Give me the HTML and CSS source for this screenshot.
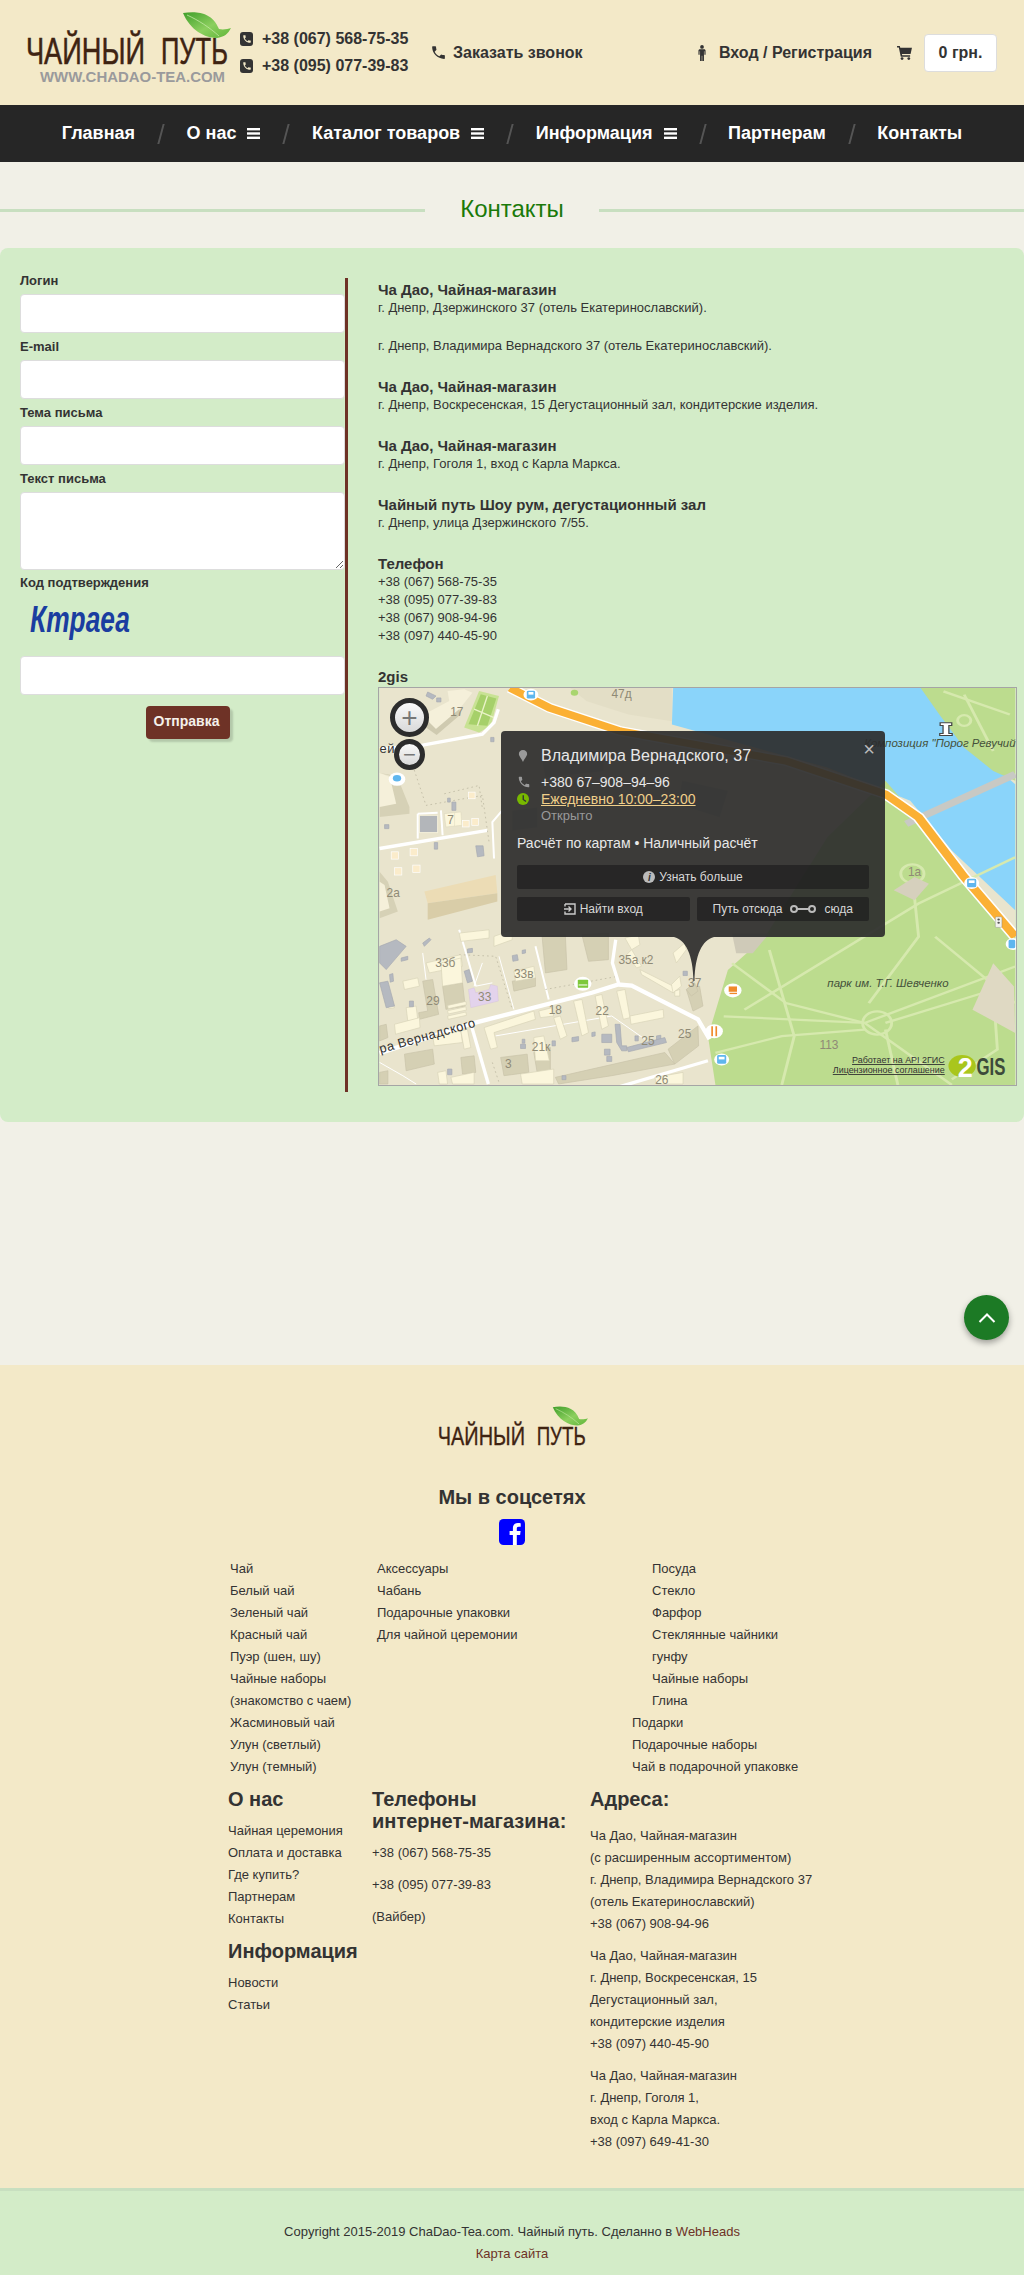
FILE: index.html
```html
<!DOCTYPE html>
<html lang="ru">
<head>
    <meta charset="UTF-8">
    <title>Контакты - Чайный путь</title>
    <link rel="stylesheet" href="styles.css">
</head>
<body>
    <svg class="defs">
        <defs>
            <linearGradient id="leafGrad" x1="0" y1="0" x2="1" y2="1">
                <stop offset="0" stop-color="#3f9e2a"/>
                <stop offset="0.55" stop-color="#8ccf5e"/>
                <stop offset="1" stop-color="#5fb53a"/>
            </linearGradient>
            <symbol id="phoneGlyph" viewBox="0 0 24 24">
                <path d="M6.600 10.800c1.400 2.800 3.800 5.100 6.600 6.600l2.200-2.200c.3-.3.7-.4 1-.2 1.100.4 2.300.6 3.600.6.6 0 1 .4 1 1V20c0 .6-.4 1-1 1C10.600 21 3 13.400 3 4c0-.6.4-1 1-1h3.500c.6 0 1 .4 1 1 0 1.200.2 2.400.6 3.600.1.300 0 .7-.2 1l-2.300 2.200z"/>
            </symbol>
            <symbol id="barsGlyph" viewBox="0 0 13 11">
                <rect width="13" height="2.400"/><rect y="4.300" width="13" height="2.400"/><rect y="8.600" width="13" height="2.400"/>
            </symbol>
            <symbol id="leafGlyph" viewBox="180 8 54 34">
                <path d="M183 13C195 11 212 11 219 29 223 30 228 29 231 28 228 34 224 37 217 38 205 38 190 30 183 13z" fill="url(#leafGrad)"/>
                <path d="M187 15C198 20 209 27 219 36" fill="none" stroke="#c4e8a4" stroke-width="0.800"/>
            </symbol>
        </defs>
    </svg>

    <header class="top-header">
        <svg class="logo" viewBox="0 0 240 105">
            <text class="logo-name" x="26" y="64" textLength="119" lengthAdjust="spacingAndGlyphs">ЧАЙНЫЙ</text>
            <text class="logo-name" x="161" y="64" textLength="67" lengthAdjust="spacingAndGlyphs">ПУТЬ</text>
            <use href="#leafGlyph" x="180" y="8" width="54" height="34"/>
            <text class="logo-url" x="40" y="82" textLength="185" lengthAdjust="spacingAndGlyphs">WWW.CHADAO-TEA.COM</text>
        </svg>
        <div class="header-phones">
            <div class="header-phone">
                <span class="phone-box"><svg class="phone-box-icon"><use href="#phoneGlyph"/></svg></span>
                +38 (067) 568-75-35
            </div>
            <div class="header-phone">
                <span class="phone-box"><svg class="phone-box-icon"><use href="#phoneGlyph"/></svg></span>
                +38 (095) 077-39-83
            </div>
        </div>
        <a class="header-link" href="#"><svg class="call-icon"><use href="#phoneGlyph"/></svg>Заказать звонок</a>
        <a class="header-link login-link" href="#">
            <svg class="person-icon" viewBox="0 0 8 18">
                <circle cx="4" cy="2.200" r="2.100"/>
                <path d="M1.600 4.800h4.800c.9 0 1.600.7 1.600 1.600v4.500H6.700V7H6.200v11H4.300v-6h-.6v6H1.800V7h-.5v3.900H0V6.400c0-.9.7-1.600 1.600-1.600z"/>
            </svg>Вход / Регистрация
        </a>
        <svg class="cart-icon" viewBox="0 0 16 15">
            <path d="M0 0h3l.5 2H16l-1.500 6.500H5.200l.3 1.500H14v1.600H4L1.900 1.600H0z"/>
            <circle cx="5.400" cy="13.500" r="1.500"/><circle cx="12.600" cy="13.500" r="1.500"/>
        </svg>
        <div class="cart-box">0 грн.</div>
    </header>

    <nav class="main-nav">
        <a href="#">Главная</a>
        <span class="nav-sep"></span>
        <a href="#">О нас <svg class="bars"><use href="#barsGlyph"/></svg></a>
        <span class="nav-sep"></span>
        <a href="#">Каталог товаров <svg class="bars"><use href="#barsGlyph"/></svg></a>
        <span class="nav-sep"></span>
        <a href="#">Информация <svg class="bars"><use href="#barsGlyph"/></svg></a>
        <span class="nav-sep"></span>
        <a href="#">Партнерам</a>
        <span class="nav-sep"></span>
        <a href="#">Контакты</a>
    </nav>

    <main class="page">
        <div class="page-title">
            <span class="title-line"></span>
            <h1>Контакты</h1>
            <span class="title-line"></span>
        </div>

        <section class="contact-card">
            <div class="form-col">
                <form class="contact-form">
                    <label>Логин</label>
                    <input type="text">
                    <label>E-mail</label>
                    <input type="text">
                    <label>Тема письма</label>
                    <input type="text">
                    <label>Текст письма</label>
                    <textarea></textarea>
                    <label>Код подтверждения</label>
                    <svg class="captcha" viewBox="0 0 150 48">
                        <text x="10" y="35" textLength="100" lengthAdjust="spacingAndGlyphs">Ктраеа</text>
                    </svg>
                    <input type="text">
                    <button type="button">Отправка</button>
                </form>
            </div>

            <div class="info-col">
                <h4>Ча Дао, Чайная-магазин</h4>
                <p>г. Днепр, Дзержинского 37 (отель Екатеринославский).</p>
                <p class="info-second">г. Днепр, Владимира Вернадского 37 (отель Екатеринославский).</p>
                <h4>Ча Дао, Чайная-магазин</h4>
                <p>г. Днепр, Воскресенская, 15 Дегустационный зал, кондитерские изделия.</p>
                <h4>Ча Дао, Чайная-магазин</h4>
                <p>г. Днепр, Гоголя 1, вход с Карла Маркса.</p>
                <h4>Чайный путь Шоу рум, дегустационный зал</h4>
                <p>г. Днепр, улица Дзержинского 7/55.</p>
                <h4>Телефон</h4>
                <p>+38 (067) 568-75-35</p>
                <p>+38 (095) 077-39-83</p>
                <p>+38 (067) 908-94-96</p>
                <p>+38 (097) 440-45-90</p>
                <h4>2gis</h4>

                <div class="map">
                    <svg class="map-svg" viewBox="0 0 639 399">
                        <rect width="639" height="399" fill="#e9e4cd"/>

                        <!-- вода, парк, правая часть -->
                        <g transform="scale(0.4167 0.3333) translate(-20 -50)">
                            <polygon fill="#8ad4fa" points="728,50 1330,50 1400,170 1470,250 1553,340 1553,720 1400,540 1300,390 1100,290 725,160"/>
                            <polygon fill="#bcdc8e" points="1325,50 1553,50 1553,330 1500,300 1430,230 1370,130"/>
                            <polygon fill="#bcdc8e" points="1240,330 1310,430 1553,800 1553,1247 830,1247 812,1100 860,900 950,800 1000,700 1100,500"/>
                            <polygon fill="#e3dec6" points="480,50 725,50 725,150 620,130 520,90"/>
                            <circle cx="490" cy="64" r="9" fill="#a9d56f"/>
                            <g class="m-path">
                                <polyline points="850,1040 1190,1060 1553,890"/>
                                <polyline points="870,880 1000,1000 1190,1060 1400,1247"/>
                                <polyline points="960,840 1020,1100 990,1247"/>
                                <polyline points="900,1020 1320,700 1553,560"/>
                                <polyline points="1200,1000 1320,800 1310,680"/>
                                <polyline points="1240,1060 1500,960 1510,1140 1400,1230"/>
                                <polyline points="1240,1080 1270,1247"/>
                                <polyline points="830,1150 990,1100 1190,1080"/>
                                <polyline points="1360,800 1553,1000"/>
                                <polyline points="1430,70 1500,240"/>
                                <polyline points="1380,60 1540,130"/>
                                <circle cx="1220" cy="1060" r="35"/>
                                <circle cx="1305" cy="610" r="28"/>
                                <circle cx="1430" cy="148" r="16"/>
                            </g>
                            <polygon fill="#dfd9c3" points="1500,880 1550,950 1553,1090 1450,1020"/>
                            <polygon fill="#d6d0bd" points="1260,660 1310,620 1345,640 1310,690"/>
                            <polyline class="m-bridge" points="1290,460 1553,310"/>
                            <polyline class="m-main-casing" points="335,50 430,110 600,180 1000,270 1240,370 1320,440 1430,620 1553,800"/>
                            <polyline class="m-main" points="335,50 430,110 600,180 1000,270 1240,370 1320,440 1430,620 1553,800"/>
                            <g class="m-d">
                                <polygon points="410,250 560,240 560,300 420,320"/>
                                <polygon points="750,330 860,360 840,440 740,400"/>
                                <polygon points="340,420 400,410 400,470 340,480"/>
                                <polygon points="870,790 960,790 920,850 880,850"/>
                            </g>
                        </g>

                        <!-- верхний левый угол -->
                        <g transform="translate(0 -2) scale(0.3333)">
                            <polygon fill="#c8e294" points="255,125 300,15 360,30 335,120 300,140"/>
                            <polygon fill="#a6d06a" points="268,115 305,25 352,38 325,120"/>
                            <path d="M285 70l60 25M325 30l-30 90" stroke="#eaf3c8" stroke-width="4" fill="none"/>
                            <polygon fill="#f5f0da" points="205,15 255,10 280,20 240,70 170,130 140,100 145,80 210,45"/>
                            <polygon fill="#cfcab0" points="140,100 170,130 240,70 245,85 172,148 140,125"/>
                            <polygon class="m-grey" points="145,18 170,30 160,40 140,30"/>
                            <polygon class="m-grey" points="172,36 185,36 185,48 172,48"/>
                            <polygon class="m-grey" points="335,155 345,155 345,168 335,168"/>
                            <polyline class="m-road-thick" points="0,190 130,178 310,145 345,110 358,70"/>
                            <polyline class="m-road-thick" points="0,490 325,435"/>
                            <polyline class="m-road-thin" points="185,375 190,450"/>
                            <polyline class="m-road-thin" points="115,385 115,460"/>
                            <polyline class="m-road-thin" points="115,385 175,382"/>
                            <polyline class="m-road-thin" points="345,520 340,410 370,375"/>
                            <polyline class="m-dots" points="100,240 140,360 310,330 330,470"/>
                            <polyline class="m-dots" points="195,325 300,300 310,370"/>
                            <polygon fill="#f5f0da" points="0,262 45,280 90,370 0,395"/>
                            <polygon fill="#d6d1b6" points="0,262 30,270 50,355 0,365 0,395 90,385 90,365 60,290 45,270"/>
                            <rect class="m-grey-big" x="120" y="390" width="55" height="52"/>
                            <polygon fill="#fbf6dc" stroke="#d2cbb0" points="195,385 245,380 248,420 200,425"/>
                            <path d="M226 382v40" stroke="#d2cbb0"/>
                            <g class="m-small">
                                <rect x="268" y="320" width="20" height="20"/>
                                <rect x="250" y="405" width="20" height="20"/>
                                <rect x="278" y="400" width="20" height="20"/>
                                <rect x="35" y="500" width="22" height="22"/>
                                <rect x="92" y="490" width="22" height="22"/>
                                <rect x="100" y="540" width="22" height="22"/>
                                <rect x="45" y="548" width="22" height="22"/>
                            </g>
                            <polygon fill="#ecdcb5" points="135,620 350,570 355,625 145,655"/>
                            <polygon fill="#d9cda8" points="145,655 355,625 355,650 145,705"/>
                            <polygon class="m-grey" points="290,482 312,482 315,512 295,515"/>
                            <polygon class="m-grey" points="218,350 230,350 230,375 218,375"/>
                            <polygon class="m-grey" points="165,472 175,472 175,492 165,492"/>
                            <polygon class="m-grey" points="205,338 213,338 213,350 205,350"/>
                            <polygon class="m-grey" points="15,418 28,418 28,430 15,430"/>
                            <polygon fill="#d6d1b6" points="0,560 25,590 55,680 0,700"/>
                            <polygon fill="#f5f0da" points="0,590 15,600 30,670 0,680"/>
                        </g>

                        <!-- нижний левый угол -->
                        <g transform="translate(0 243) scale(0.3333)">
                            <polyline class="m-road-thin" points="240,0 290,170"/>
                            <polyline class="m-road-thin" points="470,50 510,210"/>
                            <polyline class="m-road-fine" points="130,70 140,150"/>
                            <polyline class="m-road-fine" points="360,80 405,240"/>
                            <polyline class="m-road-fine" points="290,170 340,160"/>
                            <polyline class="m-road-fine" points="310,100 285,170"/>
                            <polyline class="m-road-fine" points="350,320 700,260 800,330"/>
                            <polyline class="m-road-fine" points="0,400 70,440 110,465"/>
                            <polyline class="m-dots" points="240,75 350,80 400,240"/>
                            <polyline class="m-dots" points="500,180 720,140"/>
                            <polyline class="m-dots" points="340,400 360,460"/>
                            <polyline class="m-road-main" points="0,372 280,282 640,190 720,165 760,168 960,270 995,330"/>
                            <polyline class="m-road-thick" points="277,290 328,465"/>
                            <polyline class="m-road-thick" points="712,30 702,100 722,165"/>
                            <polyline class="m-road-thick" points="700,480 990,395"/>

                            <g class="m-tan">
                                <polygon points="75,375 160,360 165,405 80,425"/>
                                <polygon points="365,385 445,375 450,430 375,440"/>
                                <polygon points="130,155 160,150 178,255 120,270 118,250 145,245"/>
                                <polygon points="870,360 960,290 962,350 890,405"/>
                                <polygon points="530,445 860,370 890,405 700,440 540,465"/>
                                <polygon points="0,430 25,425 25,465 0,465"/>
                                <polygon points="245,385 285,380 290,430 250,435"/>
                                <polygon points="190,170 250,160 258,230 200,240"/>
                                <polygon points="400,155 470,145 470,170 405,185"/>
                                <polygon points="490,20 560,15 565,120 500,130"/>
                                <polygon points="610,15 690,10 690,90 630,95"/>
                                <polygon points="0,290 20,285 25,325 0,335"/>
                                <polygon points="925,180 965,170 975,230 945,245"/>
                                <polygon points="465,370 515,355 515,430 475,430"/>
                                <polygon points="925,180 950,160 960,185 940,200"/>
                            </g>
                            <g class="m-cream">
                                <polygon points="140,100 245,75 250,110 150,130"/>
                                <polygon points="185,100 245,85 250,160 190,170"/>
                                <polygon points="70,155 115,145 120,170 75,180"/>
                                <polygon points="80,235 110,230 115,270 85,275"/>
                                <polygon points="45,285 120,265 122,295 48,315"/>
                                <polygon points="405,125 465,110 470,145 410,155"/>
                                <polygon points="315,295 465,245 470,270 345,310 355,355 335,360"/>
                                <polygon points="480,245 520,235 525,260 485,265"/>
                                <polygon points="525,265 545,260 565,320 545,330"/>
                                <polygon points="585,215 610,210 630,310 610,320"/>
                                <polygon points="650,200 670,195 690,290 670,300"/>
                                <polygon points="715,185 740,180 755,265 735,270"/>
                                <polygon points="755,260 855,240 857,265 758,285"/>
                                <polygon points="465,325 495,320 512,395 470,395"/>
                                <polygon points="160,320 245,305 250,340 165,350"/>
                                <polygon points="245,305 265,300 275,355 255,360"/>
                                <polygon points="785,120 895,175 885,190 790,135"/>
                                <polygon points="880,165 905,140 910,170 885,190"/>
                                <polygon points="890,185 905,180 905,200 890,200"/>
                                <polygon points="740,25 780,15 785,45 760,60"/>
                                <polygon points="760,60 790,110 775,115 745,75"/>
                                <polygon points="885,70 920,40 925,60 895,100"/>
                                <polygon points="240,10 330,0 330,25 245,35"/>
                                <polygon points="345,20 400,0 400,30 345,50"/>
                                <polygon points="175,430 200,425 205,465 180,465"/>
                                <polygon points="215,445 285,430 285,465 220,465"/>
                                <polygon points="425,435 525,420 525,465 430,465"/>
                                <polygon points="830,445 915,430 915,465 835,465"/>
                                <polygon points="205,228 260,216 262,226 207,238"/>
                                <polygon points="205,244 260,232 262,242 207,254"/>
                                <polygon points="205,260 260,248 262,258 207,270"/>
                                <polygon points="20,200 35,196 45,235 28,238"/>
                            </g>
                            <g class="m-grey-set">
                                <polygon points="0,50 50,30 80,50 20,120 0,100"/>
                                <polygon points="255,125 270,120 280,155 265,160"/>
                                <polygon points="65,85 85,80 85,90 65,95"/>
                                <polygon points="130,40 150,25 155,30 135,50"/>
                                <polygon points="400,78 415,75 418,92 402,95"/>
                                <polygon points="265,58 280,56 280,68 265,70"/>
                                <polygon points="430,62 440,60 440,70 430,72"/>
                                <polygon points="710,285 725,285 730,350 745,350 745,365 730,365 715,340"/>
                                <polygon points="670,315 700,315 700,340 670,340"/>
                                <polygon points="580,325 600,322 600,335 580,338"/>
                                <polygon points="640,310 650,308 650,320 640,322"/>
                                <polygon points="835,320 848,318 848,340 835,342"/>
                                <polygon points="770,320 780,320 780,335 770,335"/>
                                <polygon points="430,330 438,330 438,342 430,342"/>
                                <polygon points="425,345 440,345 440,358 425,358"/>
                                <polygon points="520,335 530,335 530,350 520,350"/>
                                <polygon points="678,360 695,360 695,378 678,378"/>
                                <polygon points="685,382 700,382 700,397 685,397"/>
                                <polygon points="205,420 218,420 218,437 205,437"/>
                                <polygon points="550,440 562,440 562,452 550,452"/>
                                <polygon points="0,160 25,155 45,230 20,235"/>
                                <polygon points="30,135 40,132 42,155 32,158"/>
                                <polygon points="90,215 102,215 102,232 90,232"/>
                                <polygon points="745,355 860,325 865,340 750,368"/>
                                <polygon points="915,125 928,125 928,138 915,138"/>
                            </g>
                            <polygon fill="#e3d3ec" stroke="#cdb9da" points="268,180 285,175 290,190 330,180 335,165 355,170 358,215 275,235"/>
                        </g>

                        <!-- значки мест -->
                        <g transform="scale(0.4167 0.3333) translate(-20 -50)">
                            <circle class="m-pin" cx="385" cy="70" r="18"/><rect x="375" y="58" width="20" height="24" rx="4" fill="#5fb6ee"/><rect x="379" y="62" width="12" height="8" fill="#fff"/>
                            <circle class="m-pin" cx="62" cy="325" r="20"/><circle cx="62" cy="322" r="10" fill="#5fb6ee"/>
                            <circle class="m-pin" cx="510" cy="942" r="21"/><rect x="498" y="930" width="25" height="24" rx="2" fill="#7ec83a"/><rect x="500" y="944" width="21" height="3" fill="#fff"/>
                            <circle class="m-pin" cx="872" cy="962" r="21"/><rect x="862" y="950" width="20" height="16" fill="#f08a2a"/><rect x="864" y="969" width="18" height="4" fill="#f08a2a"/>
                            <circle class="m-pin" cx="827" cy="1085" r="21"/><rect x="820" y="1070" width="4" height="30" fill="#f08a2a"/><rect x="830" y="1070" width="4" height="30" fill="#f08a2a"/>
                            <circle class="m-pin" cx="845" cy="1170" r="18"/><rect x="834" y="1157" width="22" height="26" rx="4" fill="#5fb6ee"/><rect x="838" y="1162" width="14" height="8" fill="#fff"/>
                            <circle class="m-pin" cx="1448" cy="638" r="18"/><rect x="1437" y="625" width="22" height="26" rx="4" fill="#5fb6ee"/><rect x="1441" y="630" width="14" height="8" fill="#fff"/>
                            <circle class="m-pin" cx="1548" cy="822" r="18"/><rect x="1537" y="809" width="16" height="26" rx="4" fill="#5fb6ee"/>
                            <rect x="1505" y="740" width="16" height="32" rx="3" fill="#f3f3ee" stroke="#777"/><circle cx="1513" cy="748" r="3" fill="#555"/><circle cx="1513" cy="758" r="3" fill="#555"/>
                            <path d="M1372 155h28v8h-7v24h8v6h-30v-6h8v-24h-7z" fill="#fff" stroke="#444" stroke-width="3"/>
                            <circle cx="1425" cy="1190" r="33" fill="#a9c61d"/>
                        </g>

                        <g class="m-num">
                            <text x="233" y="10">47д</text>
                            <text x="71" y="28">17</text>
                            <text x="68" y="137">7</text>
                            <text x="7" y="210">2а</text>
                            <text x="56" y="280">33б</text>
                            <text x="135" y="291">33в</text>
                            <text x="99" y="315">33</text>
                            <text x="47" y="319">29</text>
                            <text x="170" y="328">18</text>
                            <text x="217" y="329">22</text>
                            <text x="300" y="352">25</text>
                            <text x="153" y="365">21к</text>
                            <text x="126" y="382">3</text>
                            <text x="263" y="359">25</text>
                            <text x="240" y="277">35а к2</text>
                            <text x="310" y="301">37</text>
                            <text x="442" y="363">113</text>
                            <text x="531" y="189">1а</text>
                            <text x="277" y="398">26</text>
                        </g>
                        <text class="m-label" x="487" y="59">Композиция "Порог Ревучий"</text>
                        <text class="m-label" x="450" y="301">парк им. Т.Г. Шевченко</text>
                        <text class="m-street" transform="translate(1 367) rotate(-15.500)">ра Вернадского</text>
                        <text class="m-street" x="0" y="65">ей</text>
                        <text class="m-credit" x="568" y="377" text-anchor="end">Работает на API 2ГИС</text>
                        <text class="m-credit" x="568" y="387" text-anchor="end">Лицензионное соглашение</text>
                        <text class="m-two" x="581" y="391">2</text>
                        <text class="m-gis" x="600" y="389" textLength="29" lengthAdjust="spacingAndGlyphs">GIS</text>
                    </svg>

                    <div class="zoom-btn zoom-plus">+</div>
                    <div class="zoom-btn zoom-minus">&minus;</div>

                    <div class="balloon">
                        <span class="balloon-close">&times;</span>
                        <div class="balloon-row balloon-title">
                            <svg class="balloon-icon" viewBox="0 0 12 16"><path d="M6 0c3.300 0 5.500 2.300 5.500 5.200 0 3-2.900 4.800-5.500 10.800C3.400 10 .5 8.200.5 5.200.5 2.300 2.700 0 6 0z"/></svg>
                            Владимира Вернадского, 37
                        </div>
                        <div class="balloon-row">
                            <svg class="balloon-icon balloon-phone"><use href="#phoneGlyph"/></svg>
                            +380 67–908–94–96
                        </div>
                        <div class="balloon-row">
                            <svg class="balloon-icon" viewBox="0 0 14 14"><circle cx="7" cy="7" r="7" fill="#78b800"/><path d="M6.500 2.500h1.600v4.700l2.900 2-1 1.200-3.500-2.500z" fill="#333"/></svg>
                            <span class="balloon-hours">Ежедневно 10:00–23:00</span>
                        </div>
                        <div class="balloon-row balloon-open"><span class="balloon-icon"></span>Открыто</div>
                        <div class="balloon-pay">Расчёт по картам • Наличный расчёт</div>
                        <div class="balloon-btn balloon-more"><span class="info-dot">i</span> Узнать больше</div>
                        <div class="balloon-btns">
                            <div class="balloon-btn balloon-half">
                                <svg class="enter-icon" viewBox="0 0 12 12"><path d="M1 1h10v10H1V8.500M1 3.500V1M0 6h6.500M4.500 3.500 7 6 4.500 8.500" fill="none" stroke="#ccc" stroke-width="1.400"/></svg>
                                Найти вход
                            </div>
                            <div class="balloon-btn balloon-half balloon-route">
                                <span>Путь отсюда</span>
                                <svg class="route-icon" viewBox="0 0 26 10"><circle cx="4" cy="5" r="3" fill="none" stroke="#bbb" stroke-width="2"/><circle cx="22" cy="5" r="3" fill="none" stroke="#bbb" stroke-width="2"/><path d="M7 5h12" stroke="#bbb" stroke-width="2"/></svg>
                                <span>сюда</span>
                            </div>
                        </div>
                    </div>
                    <svg class="balloon-tail" viewBox="0 0 40 44"><path d="M0 0h40C28 3 21 18 20.500 44h-1C19 18 12 3 0 0z"/></svg>
                </div>
            </div>
        </section>
    </main>

    <a class="scroll-top" href="#">
        <svg viewBox="0 0 18 10"><path d="M1.500 9 9 1.500 16.500 9" fill="none" stroke="#fff" stroke-width="2"/></svg>
    </a>

    <footer class="site-footer">
        <svg class="footer-logo" viewBox="24 10 208 56">
            <text class="logo-name" x="26" y="64" textLength="119" lengthAdjust="spacingAndGlyphs">ЧАЙНЫЙ</text>
            <text class="logo-name" x="161" y="64" textLength="67" lengthAdjust="spacingAndGlyphs">ПУТЬ</text>
            <use href="#leafGlyph" x="180" y="8" width="54" height="34"/>
        </svg>
        <h3 class="social-title">Мы в соцсетях</h3>
        <svg class="fb-icon" viewBox="0 0 26 26">
            <rect width="26" height="26" rx="4.500" fill="#0000ff"/>
            <path d="M17.800 26V16h3.300l.5-3.900h-3.800V9.600c0-1.100.3-1.900 1.900-1.900h2V4.200c-.4 0-1.600-.2-2.900-.2-2.900 0-4.900 1.800-4.900 5v3.100h-3.300V16h3.300v10z" fill="#fff"/>
        </svg>

        <div class="footer-wrap">
            <div class="cats">
                <ul class="cats-first">
                    <li>Чай</li>
                    <li>Белый чай</li>
                    <li>Зеленый чай</li>
                    <li>Красный чай</li>
                    <li>Пуэр (шен, шу)</li>
                    <li>Чайные наборы<br>(знакомство с чаем)</li>
                    <li>Жасминовый чай</li>
                    <li>Улун (светлый)</li>
                    <li>Улун (темный)</li>
                </ul>
                <ul class="cats-second">
                    <li>Аксессуары</li>
                    <li>Чабань</li>
                    <li>Подарочные упаковки</li>
                    <li>Для чайной церемонии</li>
                </ul>
                <ul class="cats-third">
                    <li class="sub">Посуда</li>
                    <li class="sub">Стекло</li>
                    <li class="sub">Фарфор</li>
                    <li class="sub">Стеклянные чайники<br>гунфу</li>
                    <li class="sub">Чайные наборы</li>
                    <li class="sub">Глина</li>
                    <li>Подарки</li>
                    <li>Подарочные наборы</li>
                    <li>Чай в подарочной упаковке</li>
                </ul>
            </div>

            <div class="footer-info">
                <div class="info-about">
                    <h3>О нас</h3>
                    <ul>
                        <li>Чайная церемония</li>
                        <li>Оплата и доставка</li>
                        <li>Где купить?</li>
                        <li>Партнерам</li>
                        <li>Контакты</li>
                    </ul>
                    <h3 class="info-next">Информация</h3>
                    <ul>
                        <li>Новости</li>
                        <li>Статьи</li>
                    </ul>
                </div>
                <div class="info-phones">
                    <h3>Телефоны<br>интернет-магазина:</h3>
                    <p>+38 (067) 568-75-35</p>
                    <p>+38 (095) 077-39-83</p>
                    <p>(Вайбер)</p>
                </div>
                <div class="info-addr">
                    <h3>Адреса:</h3>
                    <p>Ча Дао, Чайная-магазин<br>(с расширенным ассортиментом)<br>г. Днепр, Владимира Вернадского 37<br>(отель Екатеринославский)<br>+38 (067) 908-94-96</p>
                    <p>Ча Дао, Чайная-магазин<br>г. Днепр, Воскресенская, 15<br>Дегустационный зал,<br>кондитерские изделия<br>+38 (097) 440-45-90</p>
                    <p>Ча Дао, Чайная-магазин<br>г. Днепр, Гоголя 1,<br>вход с Карла Маркса.<br>+38 (097) 649-41-30</p>
                </div>
            </div>
        </div>
    </footer>

    <div class="copyright">
        <div>Copyright 2015-2019 ChaDao-Tea.com. Чайный путь. Сделанно в <a href="#">WebHeads</a></div>
        <div><a href="#">Карта сайта</a></div>
    </div>
</body>
</html>
```

FILE: styles.css
```css
* {
    box-sizing: border-box;
}

body {
    font-family: "Liberation Sans", Arial, sans-serif;
    background-color: #f1f0e7;
    margin: 0;
    color: #333;
    font-size: 13px;
    position: relative;
}

a {
    color: inherit;
    text-decoration: none;
}

ul {
    list-style: none;
    margin: 0;
    padding: 0;
}

.defs {
    position: absolute;
    width: 0;
    height: 0;
}

/* шапка */
.top-header {
    height: 105px;
    background-color: #f3e9c8;
    display: flex;
    align-items: center;
    padding-right: 27px;
}

.logo {
    width: 240px;
    height: 105px;
    flex: none;
}

.logo-name {
    font-family: "Liberation Sans Narrow", "Liberation Sans", sans-serif;
    font-size: 36px;
    fill: #3e2312;
    stroke: #3e2312;
    stroke-width: 0.5;
}

.logo-url {
    font-family: "Liberation Sans", sans-serif;
    font-size: 15px;
    font-weight: bold;
    fill: #9a9a9c;
}

.header-phones {
    width: 192px;
    flex: none;
    font-size: 16px;
    font-weight: bold;
}

.header-phone {
    display: flex;
    align-items: center;
    gap: 9px;
    height: 27px;
}

.phone-box {
    width: 13px;
    height: 14px;
    border-radius: 3px;
    background-color: #333;
    display: flex;
    align-items: center;
    justify-content: center;
}

.phone-box-icon {
    width: 10px;
    height: 10px;
    fill: #f3e9c8;
}

.header-link {
    display: flex;
    align-items: center;
    font-size: 16px;
    font-weight: bold;
}

.call-icon {
    width: 17px;
    height: 17px;
    fill: #333;
    margin: 0 6px 0 -2px;
}

.login-link {
    margin-left: auto;
}

.person-icon {
    width: 8px;
    height: 16px;
    fill: #333;
    margin-right: 13px;
}

.cart-icon {
    width: 15px;
    height: 14px;
    fill: #333;
    margin-left: 25px;
    margin-right: 12px;
}

.cart-box {
    width: 73px;
    height: 38px;
    background-color: #fff;
    border: 1px solid #ddd;
    border-radius: 4px;
    display: flex;
    align-items: center;
    justify-content: center;
    font-size: 16px;
    font-weight: bold;
}

/* меню */
.main-nav {
    height: 57px;
    background-color: #262626;
    display: flex;
    align-items: center;
    justify-content: center;
    gap: 25px;
    color: #fff;
    font-size: 18px;
    font-weight: bold;
}

.bars {
    width: 13px;
    height: 11px;
    fill: #fff;
    margin-left: 6px;
}

.nav-sep {
    width: 1.5px;
    height: 20px;
    background-color: #555;
    transform: skewX(-15deg);
}

/* заголовок */
.page {
    padding-bottom: 243px;
}

.page-title {
    height: 86px;
    display: flex;
    align-items: center;
    padding-top: 11px;
}

.page-title h1 {
    margin: 0 35px;
    width: 104px;
    font-size: 24px;
    font-weight: normal;
    text-align: center;
    color: #1a7a0a;
    white-space: nowrap;
    position: relative;
    top: -2px;
}

.title-line {
    flex: 1;
    height: 3px;
    background-color: #c8dfc0;
}

/* блок контактов */
.contact-card {
    background-color: #d3ecc8;
    border-radius: 8px;
    padding: 30px 7px 30px 0;
    display: flex;
    gap: 30px;
}

.form-col {
    width: 348px;
    flex: none;
    padding-left: 20px;
    border-right: 3px solid #6e3226;
}

.contact-form {
    margin-top: -5px;
    display: flex;
    flex-direction: column;
}

.contact-form label {
    font-size: 13px;
    font-weight: bold;
    line-height: 16px;
    margin-bottom: 5px;
}

.contact-form input,
.contact-form textarea {
    width: 100%;
    height: 39px;
    background-color: #fff;
    border: 1px solid #ddd;
    border-radius: 4px;
    margin-bottom: 6px;
    display: block;
}

.contact-form textarea {
    height: 78px;
    margin-bottom: 5px;
}

.captcha {
    width: 150px;
    height: 48px;
    margin: 1px 0 11px;
}

.captcha text {
    font-family: "Liberation Sans", sans-serif;
    font-size: 36px;
    font-weight: bold;
    font-style: italic;
    fill: #1a3da0;
}

.contact-form button {
    align-self: center;
    width: 84px;
    height: 33px;
    margin-top: 5px;
    margin-left: 10px;
    background-color: #6e3226;
    color: #f5f0ea;
    border: none;
    border-radius: 4px;
    box-shadow: 3px 3px 2px rgba(0, 0, 0, 0.15);
    font-family: inherit;
    font-size: 14px;
    font-weight: bold;
    padding: 0 8px 3px;
    text-align: left;
}

.info-col {
    width: 639px;
    padding: 2px 0 6px;
}

.info-col h4 {
    margin: 22px 0 0;
    font-size: 15px;
    line-height: 19px;
}

.info-col h4:first-child {
    margin-top: 0;
}

.info-col p {
    margin: 0;
    line-height: 18px;
}

.info-col .info-second {
    margin-top: 20px;
}

/* карта */
.map {
    position: relative;
    width: 639px;
    height: 399px;
    margin-top: 1px;
    border: 1px solid #a5a5a5;
    overflow: hidden;
}

.map-svg {
    display: block;
    width: 100%;
    height: 100%;
}

.map-svg text {
    font-family: "Liberation Sans", sans-serif;
}

.m-road-main,
.m-road-thick,
.m-road-thin,
.m-road-fine,
.m-dots,
.m-bridge,
.m-main,
.m-main-casing {
    fill: none;
}

.m-road-main {
    stroke: #fff;
    stroke-width: 13;
}

.m-road-thick {
    stroke: #fff;
    stroke-width: 10;
}

.m-road-thin {
    stroke: #fff;
    stroke-width: 6;
}

.m-road-fine {
    stroke: #fff;
    stroke-width: 3;
}

.m-dots {
    stroke: #b3af98;
    stroke-width: 2;
    stroke-dasharray: 5 9;
}

.m-bridge {
    stroke: #c8c9c4;
    stroke-width: 20;
}

.m-path * {
    fill: none;
    stroke: #d6e9ae;
    stroke-width: 7;
}

.m-main-casing {
    stroke: #fff;
    stroke-width: 30;
}

.m-main {
    stroke: #fbb034;
    stroke-width: 22;
}

.m-cream > * {
    fill: #fbf6dc;
    stroke: #d8d3b8;
    stroke-width: 2;
}

.m-tan > * {
    fill: #d5d0b4;
    stroke: #c8c3a8;
    stroke-width: 2;
}

.m-d > * {
    fill: #cfcab8;
}

.m-grey,
.m-grey-set > * {
    fill: #b5b9c0;
    stroke: #a5a9b0;
    stroke-width: 2;
}

.m-grey-big {
    fill: #b3b6ba;
    stroke: #f5f0da;
    stroke-width: 3;
}

.m-small > * {
    fill: #fbeccb;
    stroke: #fff;
    stroke-width: 2;
}

.m-pin {
    fill: #fff;
}

.m-num text {
    font-size: 12px;
    fill: #8f8a76;
}

.m-label {
    font-size: 11.500px;
    font-style: italic;
    fill: #44513a;
}

.m-street {
    font-size: 13px;
    letter-spacing: 0.4px;
    fill: #333;
}

.m-credit {
    font-size: 9px;
    fill: #333;
    text-decoration: underline;
}

.m-two {
    font-size: 27px;
    font-weight: bold;
    fill: #fff;
}

.m-gis {
    font-size: 24px;
    font-weight: bold;
    fill: #3c4a3a;
}

.zoom-btn {
    position: absolute;
    left: 11px;
    display: flex;
    align-items: center;
    justify-content: center;
    border-radius: 50%;
    background: linear-gradient(#fafafa, #d9d9d9);
    border-style: solid;
    border-color: #2c2c2c;
    color: #777;
    font-family: "Liberation Sans", sans-serif;
}

.zoom-plus {
    top: 10px;
    width: 39px;
    height: 39px;
    border-width: 5px;
    font-size: 28px;
}

.zoom-minus {
    top: 51px;
    left: 15px;
    width: 31px;
    height: 31px;
    border-width: 5px;
    font-size: 22px;
}

/* балун */
.balloon {
    position: absolute;
    left: 122px;
    top: 43px;
    width: 384px;
    height: 206px;
    padding: 16px;
    background-color: rgba(45, 45, 45, 0.92);
    border-radius: 4px;
    color: #e8e8e8;
    font-size: 14px;
}

.balloon-close {
    position: absolute;
    top: 8px;
    right: 10px;
    font-size: 20px;
    line-height: 20px;
    color: #bbb;
}

.balloon-row {
    display: flex;
    align-items: center;
    height: 17px;
}

.balloon-title {
    height: 18px;
    font-size: 16px;
    margin-bottom: 8px;
}

.balloon-icon {
    width: 12px;
    height: 12px;
    flex: none;
    margin-right: 12px;
    fill: #9a9a9a;
}

.balloon-phone {
    width: 14px;
    height: 14px;
    margin-right: 10px;
}

.balloon-hours {
    color: #f0cf8a;
    text-decoration: underline;
}

.balloon-open {
    font-size: 13px;
    color: #999;
}

.balloon-pay {
    margin-top: 11px;
    height: 17px;
    line-height: 17px;
}

.balloon-btn {
    height: 24px;
    background-color: rgba(28, 28, 28, 0.65);
    border-radius: 2px;
    display: flex;
    align-items: center;
    justify-content: center;
    gap: 4px;
    font-size: 12px;
    color: #d8d8d8;
}

.balloon-more {
    margin-top: 13px;
}

.info-dot {
    width: 12px;
    height: 12px;
    border-radius: 50%;
    background-color: #bbb;
    color: #333;
    display: flex;
    align-items: center;
    justify-content: center;
    font-size: 10px;
    font-weight: bold;
    font-style: italic;
}

.balloon-btns {
    margin-top: 8px;
    display: flex;
    gap: 7px;
}

.balloon-half {
    flex: 1;
}

.balloon-route {
    gap: 8px;
}

.enter-icon {
    width: 12px;
    height: 12px;
}

.route-icon {
    width: 26px;
    height: 10px;
}

.balloon-tail {
    position: absolute;
    left: 295px;
    top: 249px;
    width: 40px;
    height: 44px;
    fill: rgba(45, 45, 45, 0.92);
}

/* кнопка вверх */
.scroll-top {
    position: absolute;
    left: 964px;
    top: 1295px;
    width: 45px;
    height: 45px;
    border-radius: 50%;
    background-color: #1c7a25;
    box-shadow: 0 3px 6px rgba(0, 0, 0, 0.35);
    display: flex;
    align-items: center;
    justify-content: center;
}

.scroll-top svg {
    width: 18px;
    height: 10px;
}

/* подвал */
.site-footer {
    background-color: #f3e9c8;
    padding: 40px 0 35px;
    display: flex;
    flex-direction: column;
    align-items: center;
}

.footer-logo {
    width: 153px;
    height: 41px;
    flex: none;
}

.social-title {
    margin: 40px 0 0;
    font-size: 20px;
    line-height: 22px;
}

.fb-icon {
    width: 26px;
    height: 26px;
    margin-top: 11px;
    flex: none;
}

.footer-wrap {
    width: 100%;
    padding-left: 228px;
    margin-top: 13px;
    line-height: 22px;
}

.cats {
    display: flex;
}

.cats-first {
    width: 149px;
    padding-left: 2px;
}

.cats-second {
    width: 255px;
}

.cats-third .sub {
    padding-left: 20px;
}

.footer-info {
    display: flex;
    margin-top: 10px;
}

.footer-info h3 {
    margin: 0 0 10px;
    font-size: 20px;
    line-height: 22px;
}

.footer-info p {
    margin: 0 0 10px;
}

.footer-info p:last-child {
    margin-bottom: 0;
}

.info-about {
    width: 144px;
    flex: none;
}

.info-about .info-next {
    margin-top: 10px;
}

.info-phones {
    width: 218px;
    flex: none;
}

.info-addr h3 {
    margin-bottom: 15px;
}

.copyright {
    background-color: #d3ecc8;
    border-top: 3px solid #c8dfc0;
    padding: 30px 0 10px;
    text-align: center;
    line-height: 22px;
}

.copyright a {
    color: #6e3226;
}
```
